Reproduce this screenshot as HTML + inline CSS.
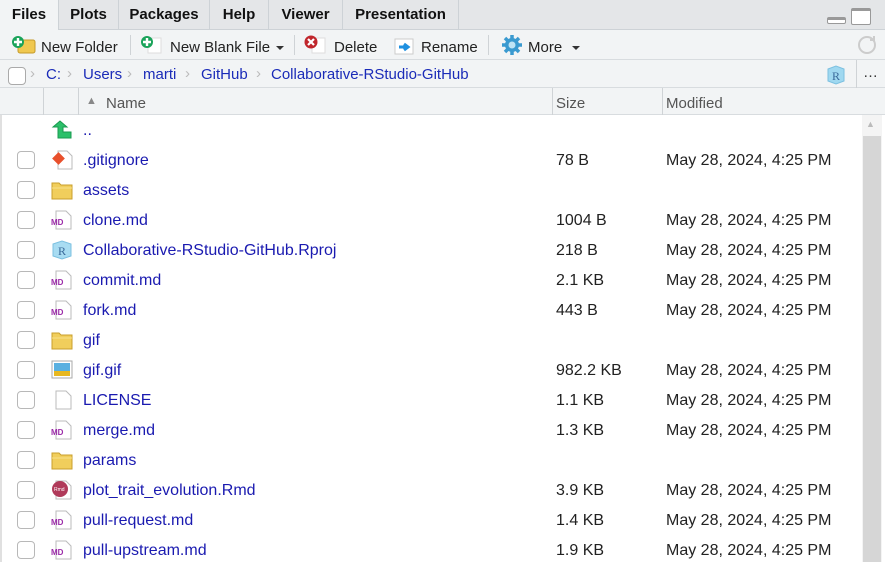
<!DOCTYPE html>
<html><head><meta charset="utf-8">
<style>
*{box-sizing:border-box;margin:0;padding:0}
body{width:885px;height:562px;overflow:hidden;background:#fff;font-family:"Liberation Sans",Arial,sans-serif;font-size:15px;color:#222;position:relative}
.tabs{position:absolute;left:0;top:0;width:885px;height:30px;background:#e4e6e8;border-bottom:1px solid #cdd2d6}
.tab{position:absolute;top:0;height:30px;line-height:30px;font-weight:bold;font-size:15px;color:#111;text-align:center;border-right:1px solid #cdd2d6}
.tab.active{background:#f2f4f5;height:31px}
.toolbar{position:absolute;left:0;top:30px;width:885px;height:30px;background:#f2f4f5;border-bottom:1px solid #d8dcdf}
.crumbs{position:absolute;left:0;top:60px;width:885px;height:28px;background:#f2f4f5;border-bottom:1px solid #d8dcdf}
.hdr{position:absolute;left:0;top:88px;width:885px;height:27px;background:#f2f4f5;border-bottom:1px solid #d8dcdf;color:#555}
.t{position:absolute;white-space:nowrap}
.sep{position:absolute;width:1px;background:#cfd3d6}
.cb{position:absolute;left:17px;width:18px;height:18px;border:1px solid #b8b8b8;border-radius:4px;background:#fff}
a{color:#1a2bb8;text-decoration:none}
.row{position:absolute;left:0;width:860px;height:30px;font-size:16px}
.row .n{position:absolute;left:83px;top:7px;color:#1a1ab0}
.row .s{position:absolute;left:556px;top:7px}
.row .m{position:absolute;left:666px;top:7px}
.ic{position:absolute;left:51px;top:5px;width:22px;height:20px}
.dd{position:absolute;top:14px;width:0;height:0;border-left:4px solid transparent;border-right:4px solid transparent;border-top:4px solid #333}
</style></head><body>

<div class="tabs">
 <div class="tab active" style="left:0;width:59px;border-left:none">Files</div>
 <div class="tab" style="left:59px;width:60px">Plots</div>
 <div class="tab" style="left:119px;width:91px">Packages</div>
 <div class="tab" style="left:210px;width:59px">Help</div>
 <div class="tab" style="left:269px;width:74px">Viewer</div>
 <div class="tab" style="left:343px;width:116px">Presentation</div>
 <div style="position:absolute;left:827px;top:17px;width:19px;height:7px;border:1.5px solid #999;border-top-width:3px;border-radius:2px;background:#fff"></div>
 <div style="position:absolute;left:851px;top:8px;width:20px;height:17px;border:1.5px solid #999;border-top-width:3px;border-radius:2px;background:#fff"></div>
</div>

<div class="toolbar">
 <svg style="position:absolute;left:11px;top:5px" width="26" height="20"><rect x="7" y="5" width="17" height="13" rx="2" fill="#f0c850" stroke="#c49a2a"/><circle cx="7" cy="7" r="6" fill="#1aa35a"/><path d="M7 3v8M3 7h8" stroke="#fff" stroke-width="2.4"/></svg>
 <div class="t" style="left:41px;top:9px">New Folder</div>
 <div class="sep" style="left:130px;top:5px;height:20px"></div>
 <svg style="position:absolute;left:138px;top:5px" width="28" height="20"><rect x="10" y="3" width="13" height="15" fill="#fff" stroke="#ddd"/><circle cx="9" cy="7" r="6" fill="#1aa35a"/><path d="M9 3v8M5 7h8" stroke="#fff" stroke-width="2.4"/></svg>
 <div class="t" style="left:170px;top:9px">New Blank File</div>
 <div class="dd" style="left:276px;top:16px"></div>
 <div class="sep" style="left:294px;top:5px;height:20px"></div>
 <svg style="position:absolute;left:302px;top:5px" width="28" height="20"><rect x="10" y="3" width="13" height="15" fill="#fff" stroke="#ddd"/><circle cx="9" cy="7" r="6.5" fill="#c0262c"/><path d="M6 4l6 6M12 4l-6 6" stroke="#fff" stroke-width="2.2"/></svg>
 <div class="t" style="left:334px;top:9px">Delete</div>
 <svg style="position:absolute;left:393px;top:6px" width="24" height="20"><rect x="2" y="3" width="18" height="15" fill="#fff" stroke="#ccc"/><path d="M6 11h8M11 8l4 3-4 3" stroke="#1e90e0" stroke-width="3" fill="none"/></svg>
 <div class="t" style="left:421px;top:9px">Rename</div>
 <div class="sep" style="left:488px;top:5px;height:20px"></div>
 <svg style="position:absolute;left:500px;top:4px" width="24" height="22"><g fill="#3a9ad0"><circle cx="12" cy="11" r="7"/><g stroke="#3a9ad0" stroke-width="3.5"><path d="M12 1v20M2 11h20M5 4l14 14M19 4L5 18"/></g></g><circle cx="12" cy="11" r="3.5" fill="#bfe4f5"/></svg>
 <div class="t" style="left:528px;top:9px">More</div>
 <div class="dd" style="left:572px;top:16px"></div>
 <svg style="position:absolute;left:856px;top:5px" width="22" height="20"><circle cx="11" cy="10" r="8" fill="none" stroke="#ccc" stroke-width="2"/><path d="M14 5l4 0 0-4" stroke="#ccc" stroke-width="2" fill="none"/></svg>
</div>

<div class="crumbs">
 <div style="position:absolute;left:8px;top:7px;width:18px;height:18px;border:1px solid #aaa;border-radius:4px;background:#fff"></div>
 <div class="t" style="left:30px;top:5px;color:#bbb">›</div>
 <a class="t" style="left:46px;top:6px">C:</a>
 <div class="t" style="left:67px;top:5px;color:#bbb">›</div>
 <a class="t" style="left:83px;top:6px">Users</a>
 <div class="t" style="left:127px;top:5px;color:#bbb">›</div>
 <a class="t" style="left:143px;top:6px">marti</a>
 <div class="t" style="left:185px;top:5px;color:#bbb">›</div>
 <a class="t" style="left:201px;top:6px">GitHub</a>
 <div class="t" style="left:256px;top:5px;color:#bbb">›</div>
 <a class="t" style="left:271px;top:6px">Collaborative-RStudio-GitHub</a>
 <svg style="position:absolute;left:825px;top:4px" width="22" height="22"><path d="M3 5l8-3 8 3v12l-8 3-8-3z" fill="#9fd8f0" stroke="#7cc0e0"/><text x="7" y="16" font-size="12" font-family="Liberation Serif" fill="#3a6a9a">R</text></svg>
 <div class="sep" style="left:856px;top:0;height:28px"></div>
 <div class="t" style="left:863px;top:4px;color:#333">…</div>
</div>

<div class="hdr">
 <div class="sep" style="left:43px;top:0;height:27px"></div>
 <div class="sep" style="left:78px;top:0;height:27px"></div>
 <div class="t" style="left:86px;top:7px;font-size:11px;color:#888">▲</div>
 <div class="t" style="left:106px;top:7px">Name</div>
 <div class="sep" style="left:552px;top:0;height:27px"></div>
 <div class="t" style="left:556px;top:7px">Size</div>
 <div class="sep" style="left:662px;top:0;height:27px"></div>
 <div class="t" style="left:666px;top:7px">Modified</div>
</div>

<div style="position:absolute;left:0;top:115px;width:2px;height:447px;background:#e0e0e0"></div>
<div style="position:absolute;left:862px;top:115px;width:20px;height:447px;background:#f4f4f4"></div>
<div class="t" style="left:866px;top:119px;font-size:9px;color:#bbb">▲</div>
<div style="position:absolute;left:863px;top:136px;width:18px;height:426px;background:#d6d6d6"></div>

<div class="row" style="top:115px">
 <svg class="ic" viewBox="0 0 22 20"><path d="M2 7l7-6 7 6h-4v5h8v6H7V7z" fill="#2cc06a" stroke="#1a9a50"/></svg>
 <div class="n">..</div>
</div>

<div id="rows"></div>
<script>
var I={
md:'<svg class="ic" viewBox="0 0 22 20"><path d="M5 1h10l5 5v13H5z" fill="#fff" stroke="#bbb"/><text x="0" y="15" font-size="8" font-weight="bold" font-family="Liberation Sans" fill="#9b2aa8">MD</text></svg>',
dir:'<svg class="ic" viewBox="0 0 22 20"><path d="M1 3h7l2 2h11v14H1z" fill="#f1ce5c" stroke="#c99f2c"/><path d="M1 8h20" stroke="#f8e08a"/></svg>',
git:'<svg class="ic" viewBox="0 0 22 20"><path d="M7 1h9l5 5v13H7z" fill="#fff" stroke="#bbb"/><rect x="3" y="4" width="9" height="9" transform="rotate(45 7.5 8.5)" fill="#e8502c"/></svg>',
r:'<svg class="ic" viewBox="0 0 22 20"><path d="M2 4l9-3 9 3v12l-9 3-9-3z" fill="#a8dcf2" stroke="#7cc0e0"/><text x="7" y="15" font-size="12" font-family="Liberation Serif" fill="#3a6a9a">R</text></svg>',
gif:'<svg class="ic" viewBox="0 0 22 20"><rect x="1" y="1" width="20" height="17" fill="#fff" stroke="#aaa"/><rect x="3" y="3" width="16" height="8" fill="#5ab0e0"/><rect x="3" y="11" width="16" height="5" fill="#e8b820"/></svg>',
f:'<svg class="ic" viewBox="0 0 22 20"><path d="M5 1h10l5 5v13H5z" fill="#fff" stroke="#bbb"/></svg>',
rmd:'<svg class="ic" viewBox="0 0 22 20"><path d="M5 1h10l5 5v13H5z" fill="#fff" stroke="#bbb"/><circle cx="9" cy="9" r="8" fill="#b03a5a"/><text x="3" y="11" font-size="5" fill="#fff" font-family="Liberation Sans">Rmd</text></svg>'};
var d=[["git",".gitignore","78 B",1],["dir","assets","",0],["md","clone.md","1004 B",1],["r","Collaborative-RStudio-GitHub.Rproj","218 B",1],["md","commit.md","2.1 KB",1],["md","fork.md","443 B",1],["dir","gif","",0],["gif","gif.gif","982.2 KB",1],["f","LICENSE","1.1 KB",1],["md","merge.md","1.3 KB",1],["dir","params","",0],["rmd","plot_trait_evolution.Rmd","3.9 KB",1],["md","pull-request.md","1.4 KB",1],["md","pull-upstream.md","1.9 KB",1]];
var h='';d.forEach(function(r,i){h+='<div class="row" style="top:'+(145+i*30)+'px"><div class="cb" style="top:6px"></div>'+I[r[0]]+'<div class="n">'+r[1]+'</div><div class="s">'+r[2]+'</div>'+(r[3]?'<div class="m">May 28, 2024, 4:25 PM</div>':'')+'</div>';});
document.getElementById('rows').innerHTML=h;
</script>
</body></html>
